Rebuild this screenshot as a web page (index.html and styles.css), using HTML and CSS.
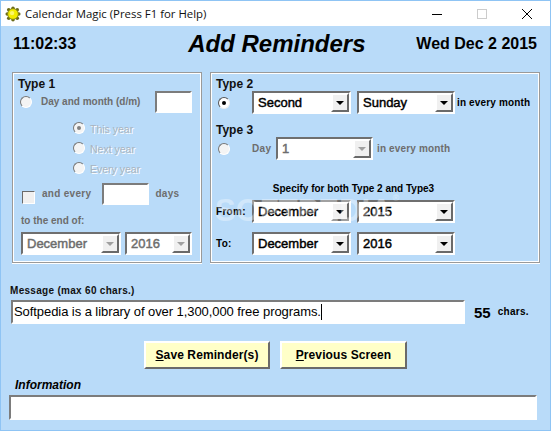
FILE: index.html
```html
<!DOCTYPE html>
<html lang="en">
<head>
<meta charset="utf-8">
<title>Calendar Magic</title>
<link rel="stylesheet" href="styles.css">
</head>
<body>
<div class="window">
  <div class="titlebar">
    <svg class="appicon" width="16" height="16" viewBox="0 0 18 18">
      <g fill="#6b6b1a">
        <circle cx="9" cy="2.5" r="2"/><circle cx="9" cy="15.5" r="2"/><circle cx="2.5" cy="9" r="2"/><circle cx="15.5" cy="9" r="2"/>
        <circle cx="4.2" cy="4.2" r="2"/><circle cx="13.8" cy="4.2" r="2"/><circle cx="4.2" cy="13.8" r="2"/><circle cx="13.8" cy="13.8" r="2"/>
      </g>
      <circle cx="9" cy="9" r="6" fill="#f2ec00" stroke="#8a8a10" stroke-width="1"/>
      <circle cx="8" cy="8" r="2.5" fill="#fbf86a"/>
    </svg>
    <span class="apptitle">Calendar Magic (Press F1 for Help)</span>
    <div class="winbtns">
      <svg width="10" height="10" viewBox="0 0 10 10"><path d="M0 5.5H10" stroke="#000" fill="none"/></svg>
      <svg width="10" height="10" viewBox="0 0 10 10"><rect x=".5" y=".5" width="9" height="9" stroke="#ccc" fill="none"/></svg>
      <svg width="10" height="10" viewBox="0 0 10 10"><path d="M0 0L10 10M10 0L0 10" stroke="#000" fill="none"/></svg>
    </div>
  </div>
  <div class="content">
    <div class="header">
      <span class="clock">11:02:33</span>
      <h1 class="heading">Add Reminders</h1>
      <span class="clock date">Wed Dec 2 2015</span>
    </div>
    <div class="panels">
      <section class="panel panel-one">
        <div class="type-label t1">Type 1</div>
        <div class="row r22">
          <span class="radio"></span>
          <span class="lbl off tight day-label">Day and month (d/m)</span>
          <span class="field day-field"></span>
        </div>
        <div class="years">
          <div class="year"><span class="radio on-off"></span><span class="etched">This year</span></div>
          <div class="year"><span class="radio"></span><span class="etched">Next year</span></div>
          <div class="year"><span class="radio"></span><span class="etched">Every year</span></div>
        </div>
        <div class="row r22 every">
          <span class="check"></span>
          <span class="lbl off every-label">and every</span>
          <span class="field every-field"></span>
          <span class="lbl off days-label">days</span>
        </div>
        <div class="lbl off tight end-label">to the end of:</div>
        <div class="row end-row">
          <div class="combo off w100"><span class="val">December</span><span class="arrow"></span></div>
          <div class="combo off w67"><span class="val">2016</span><span class="arrow"></span></div>
        </div>
      </section>
      <section class="panel panel-two">
        <div class="type-label">Type 2</div>
        <div class="row">
          <span class="lead"><span class="radio checked"></span></span>
          <div class="combo w99"><span class="val">Second</span><span class="arrow"></span></div>
          <div class="combo w98"><span class="val">Sunday</span><span class="arrow"></span></div>
          <span class="lbl note">in every month</span>
        </div>
        <div class="type-label t3">Type 3</div>
        <div class="row">
          <span class="lead"><span class="radio"></span></span>
          <span class="lbl off day-word">Day</span>
          <div class="combo off w97"><span class="val">1</span><span class="arrow"></span></div>
          <span class="lbl off note note-off">in every month</span>
        </div>
        <div class="lbl tight specify">Specify for both Type 2 and Type3</div>
        <div class="row from">
          <span class="lead lbl">From:</span>
          <div class="combo w99"><span class="val">December</span><span class="arrow"></span></div>
          <div class="combo w98"><span class="val">2015</span><span class="arrow"></span></div>
        </div>
        <div class="row to">
          <span class="lead lbl">To:</span>
          <div class="combo w99"><span class="val">December</span><span class="arrow"></span></div>
          <div class="combo w98"><span class="val">2016</span><span class="arrow"></span></div>
        </div>
        <div class="watermark">SOFTPEDIA<sup>®</sup></div>
      </section>
    </div>
    <div class="lbl msg-label">Message (max 60 chars.)</div>
    <div class="msg-row">
      <div class="field msg-field">Softpedia is a library of over 1,300,000 free programs.<span class="caret"></span></div>
      <span class="count">55</span>
      <span class="lbl chars">chars.</span>
    </div>
    <div class="actions">
      <div class="btn save"><u>S</u>ave Reminder(s)</div>
      <div class="btn prev"><u>P</u>revious Screen</div>
    </div>
    <div class="info-label">Information</div>
    <div class="field info-field"></div>
  </div>
</div>
</body>
</html>
```
FILE: styles.css
```css
* { box-sizing: border-box; }
html, body { margin: 0; padding: 0; }
body { font-family: "Liberation Sans", Arial, sans-serif; color: #000; }
.window {
  width: 551px; height: 431px; border: 1px solid #8fc4f4;
  background: #b9dbf9; display: flex; flex-direction: column; overflow: hidden;
}
.titlebar {
  height: 25px; background: #fff; display: flex; align-items: center; padding-left: 4px; flex: none;
}
.appicon { flex: none; }
.apptitle { font-family: "Open Sans", sans-serif; font-size: 11.4px; margin-left: 4px; color: #111; }
.winbtns { margin-left: auto; display: flex; gap: 35px; padding-right: 18px; }
.winbtns svg { display: block; }
.content { flex: 1; }
.header {
  height: 46px; display: flex; align-items: center;
  padding: 0 12px 10px 12px;
}
.clock { font-size: 16px; font-weight: bold; }
.date { margin-left: auto; margin-right: 1px; }
.heading { margin: 0 0 0 112px; font-size: 24px; font-weight: bold; font-style: italic; line-height: 28px; }
.panels { display: flex; gap: 8px; padding-left: 11px; }
.panel {
  height: 191px; border: 1px solid #9a9a9a; box-shadow: inset 1px 1px 0 #fff, inset -1px -1px 0 #fff, 0 1px 0 #fff;
  padding-top: 4px; position: relative;
}
.panel-one { width: 190px; padding-left: 7px; padding-right: 9px; }
.panel-two { width: 330px; padding-left: 5px; }
.type-label { font-size: 12px; font-weight: bold; line-height: 14px; height: 14px; color: #111; }
.t1 { margin-left: -2px; }
.t3 { margin-top: 9px; }
.row { display: flex; align-items: center; height: 23px; }
.r22 { height: 22px; }
.lbl { font-size: 10px; font-weight: bold; letter-spacing: .3px; line-height: 14px; }
.tight { letter-spacing: 0; }
.off { color: #6d6d6d; }
.radio {
  display: block; flex: none; width: 12px; height: 12px; border-radius: 50%; background: #f4f4f4; position: relative;
  border: 1px solid #777; border-right-color: #fff; border-bottom-color: #fff;
}
.radio.checked { border-color: #555 #eee #eee #555; background: #fff; }
.radio.checked::after, .radio.on-off::after {
  content: ""; position: absolute; left: 3px; top: 3px; width: 4px; height: 4px; border-radius: 50%; background: #000;
}
.radio.on-off::after { background: #808080; }
.day-label { margin-left: 9px; }
.field {
  display: block; background: #fff; border: 2px solid; border-color: #7c7c7c #fff #fff #7c7c7c;
}
.day-field { width: 37px; height: 22px; margin-left: auto; }
.years { margin-top: 5px; padding-left: 53px; }
.year { height: 20px; display: flex; align-items: center; gap: 5px; }
.etched { font-size: 10.5px; color: #a9b4c0; text-shadow: 1px 1px 0 #fff; padding-top: 1px; }
.every { margin-top: 5px; }
.check {
  display: block; flex: none; width: 13px; height: 13px; margin: 7px 0 0 2px; background: #f0f0f0;
  border: 1px solid; border-color: #6a6a6a #fff #fff #6a6a6a;
}
.every-label { margin: 0 0 0 7px; }
.every-field { width: 47px; height: 22px; margin-left: 11px; }
.days-label { margin: 0 0 0 6px; }
.end-label { margin-top: 9px; margin-left: 1px; }
.end-row { margin-top: 4px; margin-left: 1px; gap: 4px; }
.combo {
  height: 23px; display: flex; align-items: center; justify-content: space-between; flex: none;
  background: #fff; border: 2px solid; border-color: #6f6f6f #fff #fff #6f6f6f;
}
.val { font-size: 13px; padding-left: 4px; -webkit-text-stroke: .45px currentColor; }
.combo.off .val { color: #6d6d6d; }
.arrow {
  display: block; width: 18px; height: 19px; background: #f0f0f0; position: relative; flex: none;
  border: 2px solid; border-color: #fff #6a6a6a #6a6a6a #fff;
}
.arrow::after {
  content: ""; position: absolute; left: 3px; top: 6px;
  border: 4px solid transparent; border-top: 4px solid #000; border-bottom: 0;
}
.combo.off .arrow::after { border-top-color: #a0a0a0; }
.w100 { width: 100px; } .w67 { width: 67px; } .w99 { width: 99px; } .w98 { width: 98px; margin-left: 6px; } .w97 { width: 97px; margin-left: 4px; }
.lead { display: flex; align-items: center; width: 36px; flex: none; }
.lead .radio { margin-left: 2px; }
.note { margin-left: 2px; letter-spacing: .15px; }
.note-off { margin-left: 4px; }
.day-word { width: 20px; }
.specify { margin-top: 22px; width: 217px; text-align: center; margin-left: 29px; height: 14px; }
.from { margin-top: 4px; }
.to { margin-top: 9px; }
.watermark {
  position: absolute; left: 4px; top: 120px; font-size: 31px; font-weight: bold; color: #fff; opacity: .35; pointer-events: none;
}
.watermark sup { font-size: 9px; vertical-align: top; }
.msg-label { margin: 21px 0 0 9px; height: 14px; color: #111; }
.msg-row { display: flex; align-items: center; margin-top: 2px; padding-left: 10px; }
.msg-field { width: 454px; height: 24px; font-size: 13px; line-height: 20px; padding-left: 1px; letter-spacing: -.07px; display: flex; align-items: center; white-space: pre; }
.caret { display: inline-block; width: 1px; height: 16px; background: #000; }
.count { font-size: 15px; font-weight: bold; margin-left: 9px; }
.chars { margin-left: 7px; }
.actions { display: flex; gap: 10px; margin: 17px 0 0 143px; }
.btn {
  height: 28px; background: #ffffc8; display: flex; align-items: center; justify-content: center; font-size: 12px; font-weight: bold;
  border: 2px solid; border-color: #fff #6a6a6a #6a6a6a #fff; white-space: pre; letter-spacing: .1px;
}
.save { width: 126px; } .prev { width: 127px; }
.info-label { margin: 9px 0 0 14px; font-size: 12px; font-weight: bold; font-style: italic; height: 14px; line-height: 14px; }
.info-field { margin: 3px 0 0 8px; width: 528px; height: 25px; }
```
